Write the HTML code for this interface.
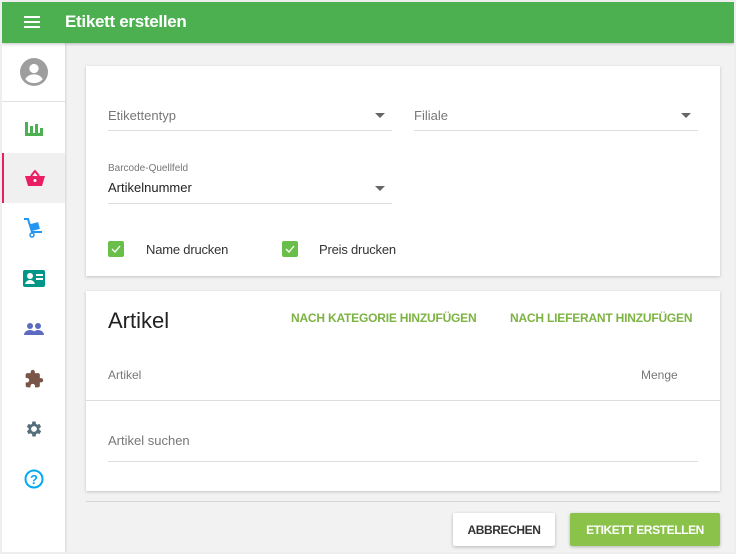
<!DOCTYPE html>
<html><head><meta charset="utf-8"><style>
*{box-sizing:border-box;margin:0;padding:0}
body{width:736px;height:554px;background:#eee;font-family:"Liberation Sans",sans-serif;position:relative;overflow:hidden}
.frame{position:absolute;left:2px;top:2px;width:732px;height:550px;background:#f2f2f2;overflow:hidden}
.hdr{position:absolute;left:0;top:0;width:732px;height:41px;background:#4caf50;box-shadow:0 1px 3px rgba(0,0,0,.25);z-index:2}
.hdr .t{position:absolute;left:63px;top:10px;color:#fff;font-size:17px;font-weight:bold;letter-spacing:-0.3px}
.side{position:absolute;left:0;top:41px;width:63px;height:509px;background:#fff;box-shadow:1px 0 2px rgba(0,0,0,.12)}
.it{position:absolute;left:0;width:63px;height:50px;display:flex;align-items:center;justify-content:center}
.card{position:absolute;left:84px;width:634px;background:#fff;box-shadow:0 1px 3px rgba(0,0,0,.2)}
.lbl{position:absolute;font-size:13px;color:#777}
.ul{position:absolute;height:1px;background:#ddd}
.arr{position:absolute;width:0;height:0;border-left:5px solid transparent;border-right:5px solid transparent;border-top:5px solid #666}
.cb{position:absolute;width:16px;height:16px;background:#6abf4b;border-radius:2px}
.btn{position:absolute;font-size:12px;font-weight:bold;display:flex;align-items:center;justify-content:center;border-radius:2px;box-shadow:0 1px 3px rgba(0,0,0,.25);letter-spacing:-0.4px}
.lk{position:absolute;top:20px;color:#7cb342;font-size:12px;font-weight:bold;letter-spacing:-0.2px}
</style></head><body>
<div class="frame">
<div class="hdr">
<svg style="position:absolute;left:22px;top:14px" width="16" height="12"><rect y="0" width="16" height="2" fill="#fff"/><rect y="5" width="16" height="2" fill="#fff"/><rect y="10" width="16" height="2" fill="#fff"/></svg>
<div class="t">Etikett erstellen</div></div>
<div class="side">
<div class="it" style="top:4px;height:50px"><svg width="28" height="28" viewBox="0 0 24 24"><circle cx="12" cy="12" r="12" fill="#9e9e9e"/><circle cx="12" cy="9" r="4" fill="#fff"/><path d="M4.5 18c2-3 4.5-4 7.5-4s5.5 1 7.5 4c-2 2.5-4.6 3.5-7.5 3.5S6.5 20.5 4.5 18z" fill="#fff"/></svg></div>
<div style="position:absolute;top:58px;left:0;width:63px;height:1px;background:#e0e0e0"></div>
<div class="it" style="top:60px"><svg width="18" height="16" viewBox="0 0 18 16"><rect x="0" y="2" width="3" height="14" fill="#4caf50"/><rect x="0" y="13" width="18" height="3" fill="#4caf50"/><rect x="5" y="6" width="3" height="9" fill="#4caf50"/><rect x="10" y="4" width="3" height="11" fill="#4caf50"/><rect x="15" y="8" width="3" height="7" fill="#4caf50"/></svg></div>
<div class="it" style="top:110px;background:#f0f0f0;border-left:2px solid #e91e63"><svg width="20" height="16" viewBox="0 0 20 16"><path d="M6 6L10 1l4 5" stroke="#e91e63" stroke-width="2" fill="none"/><path d="M0 6h20l-3 10H3z" fill="#e91e63"/><circle cx="10" cy="10.5" r="1.5" fill="#fff"/></svg></div>
<div class="it" style="top:160px"><svg width="22" height="20" viewBox="0 0 22 20"><path d="M1 1h4l4 13h10" stroke="#2196f3" stroke-width="2" fill="none"/><rect x="8" y="5" width="8" height="7" fill="#2196f3" transform="rotate(-15 12 8)"/><circle cx="9" cy="17" r="2" stroke="#2196f3" stroke-width="1.5" fill="#fff"/></svg></div>
<div class="it" style="top:210px"><svg width="22" height="17" viewBox="0 0 22 17"><rect width="22" height="17" rx="2" fill="#009688"/><circle cx="7" cy="6" r="3" fill="#fff"/><path d="M2 14c1-3 3-4 5-4s4 1 5 4z" fill="#fff"/><rect x="13" y="4" width="7" height="2" fill="#fff"/><rect x="13" y="8" width="7" height="2" fill="#fff"/></svg></div>
<div class="it" style="top:261px"><svg width="20" height="12" viewBox="0 0 20 12"><circle cx="6" cy="3" r="3" fill="#5c6bc0"/><circle cx="14" cy="3" r="3" fill="#5c6bc0"/><path d="M0 12c0-3 3-5 6-5s6 2 6 5z M9 12c0-3 2-5 5-5s6 2 6 5z" fill="#5c6bc0"/></svg></div>
<div class="it" style="top:311px"><svg width="20" height="20" viewBox="0 0 24 24"><path d="M20.5 11H19V7c0-1.1-.9-2-2-2h-4V3.5a2.5 2.5 0 0 0-5 0V5H4c-1.1 0-2 .9-2 2v3.8h1.5c1.5 0 2.7 1.2 2.7 2.7S5 16.2 3.5 16.2H2V20c0 1.1.9 2 2 2h3.8v-1.5c0-1.5 1.2-2.7 2.7-2.7s2.7 1.200 2.7 2.7V22H17c1.1 0 2-.9 2-2v-4h1.5a2.5 2.5 0 0 0 0-5z" fill="#795548"/></svg></div>
<div class="it" style="top:361px"><svg width="20" height="20" viewBox="0 0 24 24"><path d="M19.4 13a7.5 7.5 0 0 0 0-2l2.1-1.6-2-3.5-2.5 1a7 7 0 0 0-1.7-1L15 3h-4l-.4 2.9a7 7 0 0 0-1.7 1l-2.5-1-2 3.5L6.6 11a7.5 7.5 0 0 0 0 2l-2.1 1.6 2 3.5 2.5-1a7 7 0 0 0 1.7 1L11 21h4l.4-2.9a7 7 0 0 0 1.7-1l2.5 1 2-3.5zM13 15.5a3.5 3.5 0 1 1 0-7 3.5 3.5 0 0 1 0 7z" fill="#546e7a" transform="translate(-1 0)"/></svg></div>
<div class="it" style="top:411px"><svg width="20" height="20" viewBox="0 0 20 20"><circle cx="10" cy="10" r="8.5" stroke="#03a9f4" stroke-width="2" fill="none"/><text x="10" y="15" text-anchor="middle" font-size="13" font-weight="bold" fill="#03a9f4" font-family="Liberation Sans">?</text></svg></div>
</div>

<div class="card" style="top:64px;height:210px">
<div class="lbl" style="left:22px;top:42px">Etikettentyp</div>
<div class="arr" style="left:289px;top:47px"></div>
<div class="ul" style="left:22px;top:64px;width:284px"></div>
<div class="lbl" style="left:328px;top:42px">Filiale</div>
<div class="arr" style="left:595px;top:47px"></div>
<div class="ul" style="left:328px;top:64px;width:284px"></div>
<div class="lbl" style="left:22px;top:97px;font-size:10px">Barcode-Quellfeld</div>
<div style="position:absolute;left:22px;top:114px;font-size:13px;color:#222">Artikelnummer</div>
<div class="arr" style="left:289px;top:120px"></div>
<div class="ul" style="left:22px;top:137px;width:284px"></div>
<div class="cb" style="left:22px;top:175px"><svg width="16" height="16"><path d="M4 8l3 3 5-6" stroke="#fff" stroke-width="1.3" fill="none"/></svg></div>
<div style="position:absolute;left:60px;top:176px;font-size:13px;color:#333;letter-spacing:-0.2px">Name drucken</div>
<div class="cb" style="left:196px;top:175px"><svg width="16" height="16"><path d="M4 8l3 3 5-6" stroke="#fff" stroke-width="1.3" fill="none"/></svg></div>
<div style="position:absolute;left:233px;top:176px;font-size:13px;color:#333;letter-spacing:-0.2px">Preis drucken</div>
</div>

<div class="card" style="top:289px;height:200px">
<div style="position:absolute;left:22px;top:17px;font-size:22px;color:#222">Artikel</div>
<div class="lk" style="left:205px">NACH KATEGORIE HINZUFÜGEN</div>
<div class="lk" style="left:424px">NACH LIEFERANT HINZUFÜGEN</div>
<div class="lbl" style="left:22px;top:77px;font-size:12px">Artikel</div>
<div class="lbl" style="left:555px;top:77px;font-size:12px">Menge</div>
<div class="ul" style="left:0;top:109px;width:634px"></div>
<div class="lbl" style="left:22px;top:142px">Artikel suchen</div>
<div class="ul" style="left:22px;top:170px;width:590px"></div>
</div>
<div style="position:absolute;left:84px;top:499px;width:634px;height:1px;background:#d6d6d6"></div>
<div class="btn" style="left:451px;top:511px;width:102px;height:33px;background:#fff;color:#333">ABBRECHEN</div>
<div class="btn" style="left:568px;top:511px;width:150px;height:33px;background:#8bc34a;color:#fff">ETIKETT ERSTELLEN</div>
</div>
</body></html>
